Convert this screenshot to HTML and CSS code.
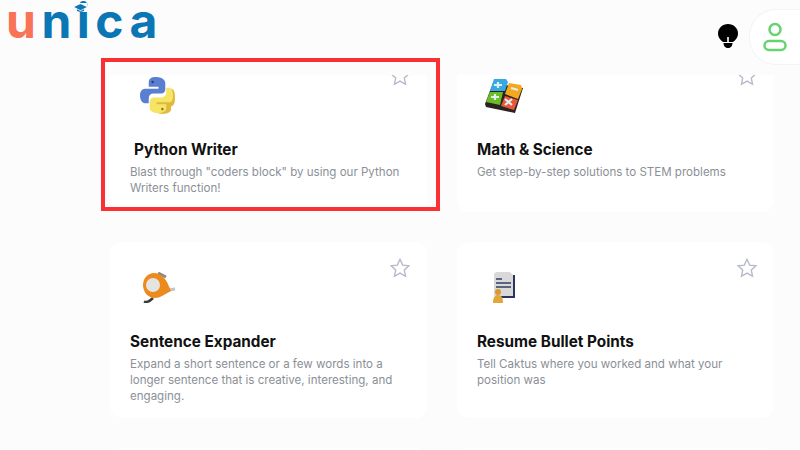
FILE: index.html
```html
<!DOCTYPE html>
<html lang="en">
<head>
    <meta charset="UTF-8">
    <meta name="viewport" content="width=device-width, initial-scale=1.0">
    <title>Unica: AI Tools</title>
    <link rel="stylesheet" href="styles.css">
</head>
<body>

    <!-- Top bar -->
    <header class="topbar">
        <div class="logo">
            <span class="logo-u">u</span><span class="logo-rest">nica</span>
            <svg class="logo-cap" viewBox="0 0 14 10"><path d="M7 1 14 4.500 7 8 0 4.500Z" fill="#0b76b4"/><path d="M3 7v1.500c2 1.500 6 1.500 8 0V7L7 9Z" fill="#0b76b4"/></svg>
        </div>
        <div class="topbar-right">
            <svg class="bulb" viewBox="0 0 20 25"><path d="M10 0C4.500 0 0 4.200 0 9.500c0 4 2.500 6.800 5 8.500h10c2.500-1.700 5-4.500 5-8.500C20 4.200 15.500 0 10 0Z" fill="#000"/><path d="M9.200 13h1.600v5H9.200Z" fill="#fff"/><path d="M5.500 19h9c0 3-2 5-4.500 5s-4.500-2-4.500-5Z" fill="#000"/></svg>
            <div class="user-tab">
                <svg viewBox="0 0 24 30" class="user-icon"><circle cx="12" cy="7.500" r="5.500"/><rect x="1.500" y="19" width="21" height="9" rx="4.500"/></svg>
            </div>
        </div>
    </header>

    <!-- Cards, scrolled a little under the top bar -->
    <main class="scroller">
        <div class="card-grid">

            <div class="card">
                <div class="card-icon">
                    <svg viewBox="0 0 36 38" width="35" height="37">
                        <path d="M32 12v5c0 3-2 6-5 6h-8c-3 0-5 2-5 4v6c0 3 4 5 9 5 6 0 9-2 9-5v-3c3 0 4-4 4-9s-1-9-4-9Z" fill="#e0b93e"/>
                        <path d="M17 0C11 0 9 2 9 6v4h10v2H5c-3 0-5 3-5 7s2 8 5 8h4v-5c0-3 2-5 5-5h8c2 0 4-2 4-4V6c0-3-4-6-9-6Z" fill="#5a7fd0"/>
                        <path d="M27 11v5c0 3-2 5-5 5h-8c-2 0-4 2-4 4v7c0 3 4 5 8 5 6 0 9-2 9-5v-4H17v-2h13c3 0 4-3 4-7s-1-8-4-8Z" fill="#f6e565"/>
                        <circle cx="13" cy="5" r="1.300" fill="#27407c"/><circle cx="23" cy="33" r="1.300" fill="#8a7a20"/>
                    </svg>
                </div>
                <h3 class="card-title shifted">Python Writer</h3>
                <p class="card-text">Blast through "coders block" by using our Python Writers function!</p>
                <svg class="star" viewBox="0 0 24 24"><path d="M12 2.500 14.900 8.800 21.700 9.600 16.700 14.200 18 21 12 17.600 6 21 7.300 14.200 2.300 9.600 9.100 8.800Z"/></svg>
            </div>

            <div class="card">
                <div class="card-icon icon-math">
                    <svg viewBox="0 0 39 34" width="39" height="34">
                        <path d="M8 4 38 9 30 34 1 28 0 25Z" fill="#2a2320"/>
                        <path d="M9 0H21L23 3 20 12H5Z" fill="#35a9e6"/>
                        <path d="M24 4 36 6 37 10 33 20 20 15Z" fill="#f4a81d"/>
                        <path d="M5 13H18L15 26 1 23Z" fill="#6cbd25"/>
                        <path d="M20 17 33 21 29 31 16 27Z" fill="#e9563a"/>
                        <path d="M9 6h8M13 3v6M26 9l7 2M6 18h8M10 15v6M20 20l7 6M27 20l-7 6" stroke="#dff0ee" stroke-width="2.200" fill="none"/>
                    </svg>
                </div>
                <h3 class="card-title">Math &amp; Science</h3>
                <p class="card-text">Get step-by-step solutions to STEM problems</p>
                <svg class="star" viewBox="0 0 24 24"><path d="M12 2.500 14.900 8.800 21.700 9.600 16.700 14.200 18 21 12 17.600 6 21 7.300 14.200 2.300 9.600 9.100 8.800Z"/></svg>
            </div>

            <div class="card">
                <div class="card-icon icon-tape">
                    <svg viewBox="0 0 32 31" width="32" height="31">
                        <path d="M15 1 23 5" stroke="#8a8a8a" stroke-width="3"/>
                        <path d="M26 18 32 17" stroke="#c4c4c4" stroke-width="3"/>
                        <path d="M1 29.500C4 31 8 28 10 26" stroke="#3a3a3a" stroke-width="2.500" fill="none"/>
                        <path d="M11 1C5 1 0 6 0 13c0 7 5 13 12 13 3 0 5-1 7-2l9-5-4-9C21 5 17 1 11 1Z" fill="#ec8a1e"/>
                        <circle cx="10" cy="13" r="7" fill="#e4e4e0"/>
                    </svg>
                </div>
                <h3 class="card-title">Sentence Expander</h3>
                <p class="card-text">Expand a short sentence or a few words into a longer sentence that is creative, interesting, and engaging.</p>
                <svg class="star" viewBox="0 0 24 24"><path d="M12 2.500 14.900 8.800 21.700 9.600 16.700 14.200 18 21 12 17.600 6 21 7.300 14.200 2.300 9.600 9.100 8.800Z"/></svg>
            </div>

            <div class="card">
                <div class="card-icon icon-doc">
                    <svg viewBox="0 0 22 31" width="22" height="31">
                        <path d="M3 3H22V26H3Z" fill="#2b3560"/>
                        <path d="M3 0H17L20 3V24H1V2Z" fill="#d9d9d9"/>
                        <path d="M3 7H9M3 11H18M3 15H18" stroke="#333c62" stroke-width="1.600"/>
                        <circle cx="5" cy="20" r="3" fill="#d99a2b"/>
                        <path d="M0 31c0-6 2-8 5-8s5 2 5 8Z" fill="#e3a63a"/>
                    </svg>
                </div>
                <h3 class="card-title">Resume Bullet Points</h3>
                <p class="card-text">Tell Caktus where you worked and what your position was</p>
                <svg class="star" viewBox="0 0 24 24"><path d="M12 2.500 14.900 8.800 21.700 9.600 16.700 14.200 18 21 12 17.600 6 21 7.300 14.200 2.300 9.600 9.100 8.800Z"/></svg>
            </div>

            <div class="card"></div>
            <div class="card"></div>

        </div>
    </main>

    <!-- Red annotation box -->
    <div class="highlight"></div>

</body>
</html>
```

FILE: styles.css
```css
/* General styles */
html, body {
    height: 100%;
}

body {
    margin: 0;
    background-color: #fcfcfc;
    font-family: Inter, 'Liberation Sans', sans-serif;
    overflow: hidden;
    display: flex;
    flex-direction: column;
}

/* Top bar */
.topbar {
    height: 75px;
    flex-shrink: 0;
    display: flex;
    justify-content: space-between;
    align-items: flex-start;
}

.logo {
    position: relative;
    margin-left: 6px;
    display: flex;
    font-weight: 700;
    font-size: 48px;
    letter-spacing: 5.500px;
    color: #0b76b4;
}

.logo-u,
.logo-rest {
    display: inline-block;
    height: 42px;
    line-height: 42px;
}

.logo-u {
    color: #f97356;
}

/* sits on the i, hides its dot */
.logo-cap {
    position: absolute;
    left: 68px;
    top: 3px;
    width: 13px;
    height: 9px;
    background-color: #fcfcfc;
}

.topbar-right {
    display: flex;
    align-items: flex-start;
    gap: 11px;
    padding-top: 9px;
}

.bulb {
    width: 20px;
    height: 25px;
    margin-top: 15px;
}

.user-tab {
    width: 50px;
    height: 54px;
    background-color: #fff;
    border: 1px solid #f3f3f8;
    border-right: none;
    border-radius: 27px 0 0 27px;
    display: flex;
    align-items: center;
    justify-content: center;
}

.user-icon {
    width: 24px;
    height: 30px;
    fill: none;
    stroke: #66d36e;
    stroke-width: 2.500;
}

/* Cards */
.scroller {
    flex-grow: 1;
    overflow: hidden;
}

.card-grid {
    display: grid;
    grid-template-columns: 317px 317px;
    grid-template-rows: 162px 176px 40px;
    column-gap: 30px;
    row-gap: 30px;
    margin: -25px 0 0 110px;
}

.card {
    position: relative;
    background-color: #fff;
    border-radius: 12px;
    padding: 24px 20px 0;
}

.card-icon {
    height: 40px;
    box-sizing: border-box;
    padding-top: 3px;
    display: flex;
    align-items: center;
    padding-left: 10px;
}

.icon-math {
    padding-left: 8px;
}

.icon-tape {
    padding-left: 13px;
}

.icon-doc {
    padding-left: 16px;
}

.card-title {
    margin: 25px 0 3px;
    font-size: 15.300px;
    line-height: 22px;
    font-weight: 700;
    color: #111;
}

.card-title.shifted {
    margin-left: 4px;
}

.card-text {
    margin: 0;
    font-size: 11.550px;
    line-height: 16px;
    color: #8b9097;
}

.star {
    position: absolute;
    top: 15px;
    right: 16px;
    width: 22px;
    height: 22px;
    fill: none;
    stroke: #b6b8cc;
    stroke-width: 1.500;
}

/* Red annotation box */
.highlight {
    position: absolute;
    left: 101px;
    top: 58px;
    width: 339px;
    height: 153px;
    box-sizing: border-box;
    border: 4px solid #fb3034;
}
```
